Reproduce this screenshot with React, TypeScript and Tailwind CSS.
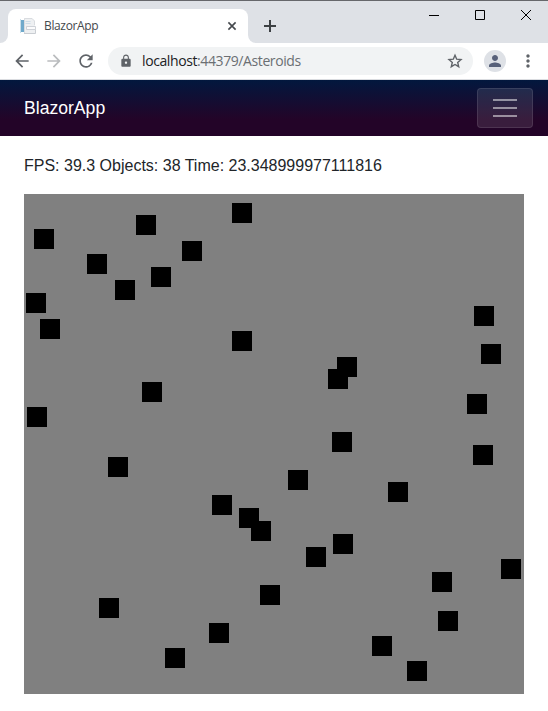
import {
  MdArrowBack,
  MdArrowForward,
  MdLock,
  MdMoreVert,
  MdPerson,
  MdRefresh,
} from "react-icons/md";

const asteroids: [number, number][] = [
  [10, 35], [112, 21], [158, 47], [63, 60], [127, 73], [91, 86],
  [2, 99], [16, 125], [208, 9], [450, 112], [208, 137], [457, 150],
  [118, 188], [3, 213], [84, 263], [313, 163], [304, 175], [308, 238],
  [264, 276], [364, 288], [188, 301], [215, 314], [227, 327], [309, 340],
  [282, 353], [443, 200], [449, 251], [75, 404], [185, 429], [141, 454],
  [236, 391], [408, 378], [477, 365], [414, 417], [348, 442], [383, 467],
];

function PageIcon() {
  return (
    <svg width="16" height="16" viewBox="0 0 16 16" className="shrink-0">
      <path d="M0 1h1v14H0z" fill="#c9dfeb" />
      <path d="M1 2h3v12H1z" fill="#6fa9cb" />
      <path d="M4 0h8l3 3v13H4z" fill="#eef0f2" />
      <path d="M4.500 15.500V.5h7.500l2.500 2.500v4" fill="none" stroke="#d3d7db" strokeWidth=".8" />
      <path d="M5.500 3.500h5M5.500 5.500h5" stroke="#cddde8" />
      <path d="M6.500 8.500h9v3h-9z" fill="#fbfbfc" stroke="#c4c9cf" strokeWidth=".8" />
      <path d="M4 15.500h11.500v-4" fill="none" stroke="#c9cdd2" />
    </svg>
  );
}

function StarIcon() {
  return (
    <svg width="16" height="16" viewBox="0 0 16 16" className="shrink-0">
      <path
        d="M8 2.200l1.700 4 4.300.4-3.300 2.850 1 4.250L8 11.450 4.300 13.700l1-4.250L2 6.600l4.300-.4z"
        fill="none"
        stroke="#5f6368"
        strokeWidth="1.400"
      />
    </svg>
  );
}

function TabStrip() {
  return (
    <div className="flex h-[43px] items-start border-t border-[#66676b] bg-[#dee1e6]">
      <div className="flex h-[42px] w-2 flex-col justify-end bg-white">
        <div className="h-full rounded-br-lg bg-[#dee1e6]" />
      </div>
      <div className="mt-2 flex h-[34px] w-60 items-center rounded-t-lg bg-white pr-2 pl-3">
        <PageIcon />
        <span className="ml-2 flex-1 font-['Open_Sans','Noto_Sans',sans-serif] text-[12px] leading-4 tracking-[-0.36px] text-[#45494d]">
          BlazorApp
        </span>
        <svg width="16" height="16" viewBox="0 0 16 16" className="shrink-0">
          <path d="M4.400 4.400l7.200 7.200M11.600 4.400l-7.200 7.200" stroke="#45494d" strokeWidth="1.600" />
        </svg>
      </div>
      <div className="h-[42px] w-2 bg-white">
        <div className="h-full rounded-bl-lg bg-[#dee1e6]" />
      </div>
      <svg width="12" height="12" viewBox="0 0 12 12" className="mt-[19px] ml-2">
        <path d="M6 0v12M0 6h12" stroke="#3c4043" strokeWidth="2" />
      </svg>
      <div className="mt-[9px] ml-auto flex items-center gap-9 pr-[17px]">
        <svg width="10" height="10" viewBox="0 0 10 10">
          <path d="M0 5.500h10" stroke="#000" />
        </svg>
        <svg width="10" height="10" viewBox="0 0 10 10">
          <path d="M.5.5h9v9h-9z" fill="none" stroke="#000" />
        </svg>
        <svg width="10" height="10" viewBox="0 0 10 10">
          <path d="M0 0l10 10M10 0L0 10" stroke="#000" />
        </svg>
      </div>
    </div>
  );
}

function Toolbar() {
  return (
    <div className="flex h-[37px] items-center border-b border-[#dadce0] bg-white text-[#5f6368]">
      <MdArrowBack size={20} className="ml-3 shrink-0" />
      <MdArrowForward size={20} className="ml-3 shrink-0 text-[#babcbe]" />
      <MdRefresh size={20} className="ml-3 shrink-0" />
      <div className="ml-3 flex h-7 w-[365px] items-center rounded-full bg-[#f1f3f4] pr-[10px] pl-[11px]">
        <MdLock size={14} className="shrink-0" />
        <span className="ml-[9px] flex-1 font-['Open_Sans','Noto_Sans',sans-serif] text-[14px] leading-5 tracking-[-0.4px] text-[#6b6f73]">
          <span className="text-[#202124]">localhost</span>:44379/Asteroids
        </span>
        <StarIcon />
      </div>
      <div className="ml-[11px] flex size-[22px] shrink-0 items-center justify-center rounded-full bg-[#dee1e6] text-[#58617a]">
        <MdPerson size={18} />
      </div>
      <MdMoreVert size={20} className="ml-3 shrink-0" />
    </div>
  );
}

export default function App() {
  return (
    <div className="h-[711px] w-[548px] overflow-hidden bg-white font-['Liberation_Sans',Arial,sans-serif]">
      <TabStrip />
      <Toolbar />
      <nav className="flex h-14 items-center justify-between bg-[linear-gradient(180deg,#02183e_0px,#230428_39px)] pr-[15px] pl-6">
        <a className="text-[17.6px] leading-7 text-white">BlazorApp</a>
        <button className="flex h-10 w-14 flex-col items-center justify-center gap-1.5 rounded border border-white/10 bg-white/10">
          <span className="h-0.5 w-6 bg-white/50" />
          <span className="h-0.5 w-6 bg-white/50" />
          <span className="h-0.5 w-6 bg-white/50" />
        </button>
      </nav>
      <main className="px-6 pt-[18px]">
        <p className="mb-4 text-base leading-6 text-[#212529]">
          FPS: 39.3 Objects: 38 Time: 23.348999977111816
        </p>
        <div className="relative size-[500px] bg-[#808080]">
          {asteroids.map(([x, y]) => (
            <div key={`${x}-${y}`} className="absolute size-5 bg-black" style={{ left: x, top: y }} />
          ))}
        </div>
      </main>
    </div>
  );
}
